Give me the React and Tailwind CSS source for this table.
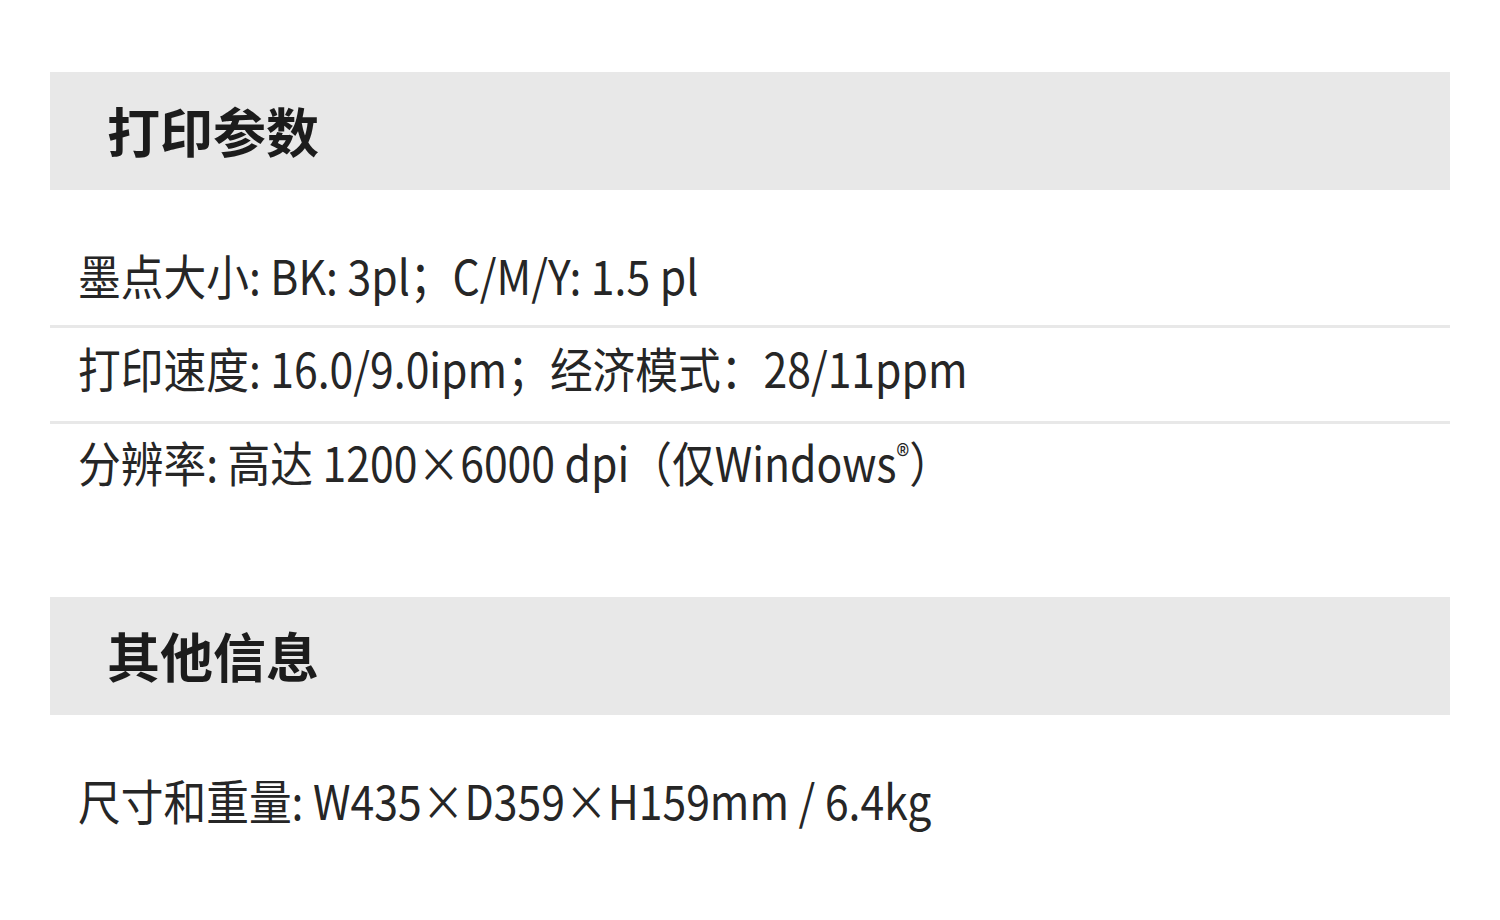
export default function App() {
  const font = { fontFamily: '"Noto Sans CJK SC", "Noto Sans", sans-serif' };
  const Row = ({ children, border, extra }) => (
    <div className={`h-[96px] flex items-center px-[28px] ${border ? 'border-b-[3px] border-[#e8e8e8]' : ''} ${extra}`}>
      <span className="inline-block origin-left scale-x-[0.89] whitespace-nowrap text-[48px] leading-none text-[#262626]">{children}</span>
    </div>
  );
  const Band = ({ children }) => (
    <div className="h-[118px] bg-[#e8e8e8] flex items-center pl-[57px] pb-[2px]">
      <span className="text-[53px] font-bold leading-none text-[#1c1c1c]">{children}</span>
    </div>
  );
  return (
    <div className="w-[1500px] h-[920px] bg-white px-[50px] pt-[72px]" style={font}>
      <Band>打印参数</Band>
      <div className="pt-[42px]">
        <Row border extra="pb-[10px]">墨点大小: BK: 3pl；C/M/Y: 1.5 pl</Row>
        <Row border extra="pb-[15px]">打印速度: 16.0/9.0ipm；经济模式：28/11ppm</Row>
        <Row extra="pb-[22px]">分辨率: 高达 1200×6000 dpi（仅Windows<sup className="text-[30px]">®</sup>）</Row>
      </div>
      <div className="mt-[77px]">
        <Band>其他信息</Band>
      </div>
      <div className="pt-[40px]">
        <Row extra="pb-[8px]">尺寸和重量: W435×D359×H159mm / 6.4kg</Row>
      </div>
    </div>
  );
}
